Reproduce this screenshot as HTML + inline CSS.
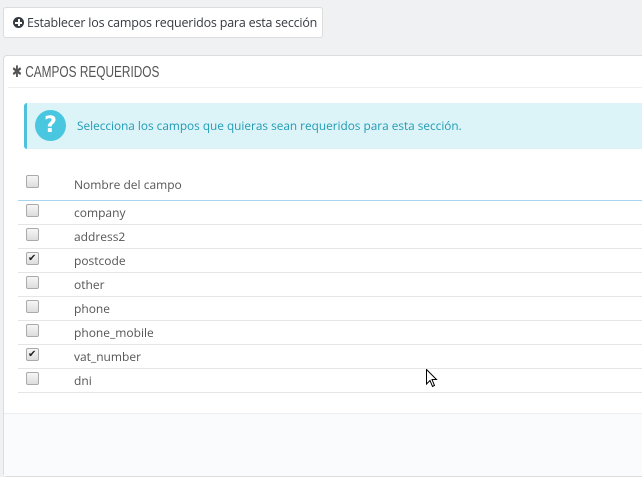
<!DOCTYPE html>
<html><head><meta charset="utf-8"><style>
body{margin:0;width:642px;height:457px;overflow:hidden;background:#eff1f2;font-family:"Open Sans","DejaVu Sans","Liberation Sans",sans-serif;position:relative;color:#555}
.btn{position:absolute;left:3px;top:7px;width:318px;height:29px;background:#fff;border:1px solid #dcdcdc;border-radius:3px;font-size:12.5px;line-height:29px;color:#363a41;letter-spacing:-0.2px}
.btn .ic{position:absolute;left:9px;top:9px;width:11px;height:11px;border-radius:50%;background:#363a41}
.btn .ic:before{content:"";position:absolute;left:2px;top:4.5px;width:7px;height:2px;background:#fff}
.btn .ic:after{content:"";position:absolute;left:4.5px;top:2px;width:2px;height:7px;background:#fff}
.panel{position:absolute;left:3px;top:55px;width:660px;height:420px;background:#fff;border:1px solid #dcdcdc;border-radius:4px}
.hd{position:absolute;left:8px;top:6px;font-family:"Liberation Sans",sans-serif;font-size:16px;color:#555;transform:scaleX(0.74);transform-origin:0 0;white-space:nowrap}
.hdline{position:absolute;left:4px;right:0;top:31px;height:1px;background:#eee}
.alert{position:absolute;left:20px;top:47px;width:640px;height:46px;background:#dcf3f8;border-left:3px solid #4fc1dd;border-radius:3px 0 0 3px}
.alert .q{position:absolute;left:8px;top:7px;width:31px;height:31px;border-radius:50%;background:#4ac7e0;color:#fff;font:bold 22px/31px "DejaVu Sans",sans-serif;text-align:center}
.alert .t{position:absolute;left:50px;top:15px;font-size:11.8px;color:#1f9bb5}
.row{position:absolute;left:14px;width:650px;height:23px;border-bottom:1px solid #e6e6e6;font-size:12px}
.row span{position:absolute;left:56px;top:3px}
.cb{position:absolute;left:8px;top:3px;width:11px;height:11px;border:1px solid #aaa;border-radius:2px;background:linear-gradient(#f6f6f6,#ddd)}
.cb.c:after{content:"✔";position:absolute;left:1px;top:-3px;font-size:10px;color:#222}
.foot{position:absolute;left:0;right:0;top:357px;bottom:0;background:#fafbfc;border-top:1px solid #eee}
</style></head><body>
<div class="btn"><div class="ic"></div><span style="position:absolute;left:23px">Establecer los campos requeridos para esta sección</span></div>
<div class="panel">
<div class="hd">✱ CAMPOS REQUERIDOS</div>
<div class="hdline"></div>
<div class="alert"><div class="q">?</div><div class="t">Selecciona los campos que quieras sean requeridos para esta sección.</div></div>
<div class="row" style="top:108px;height:36px;border-bottom:1px solid #a8d4ee"><div class="cb" style="top:11px"></div><span style="top:12px">Nombre del campo</span></div>
<div class="row" style="top:145px"><div class="cb"></div><span>company</span></div>
<div class="row" style="top:169px"><div class="cb"></div><span>address2</span></div>
<div class="row" style="top:193px"><div class="cb c"></div><span>postcode</span></div>
<div class="row" style="top:217px"><div class="cb"></div><span>other</span></div>
<div class="row" style="top:241px"><div class="cb"></div><span>phone</span></div>
<div class="row" style="top:265px"><div class="cb"></div><span>phone_mobile</span></div>
<div class="row" style="top:289px"><div class="cb c"></div><span>vat_number</span></div>
<div class="row" style="top:313px"><div class="cb"></div><span>dni</span></div>
<div class="foot"></div>
</div>
<svg style="position:absolute;left:426px;top:369px" width="12" height="19" viewBox="0 0 12 19"><path d="M0.5 0.5 L0.5 15 L4 11.5 L6.5 17.5 L8.5 16.5 L6 10.5 L10.5 10.5 Z" fill="#fff" stroke="#000" stroke-width="1"/></svg>
</body></html>
